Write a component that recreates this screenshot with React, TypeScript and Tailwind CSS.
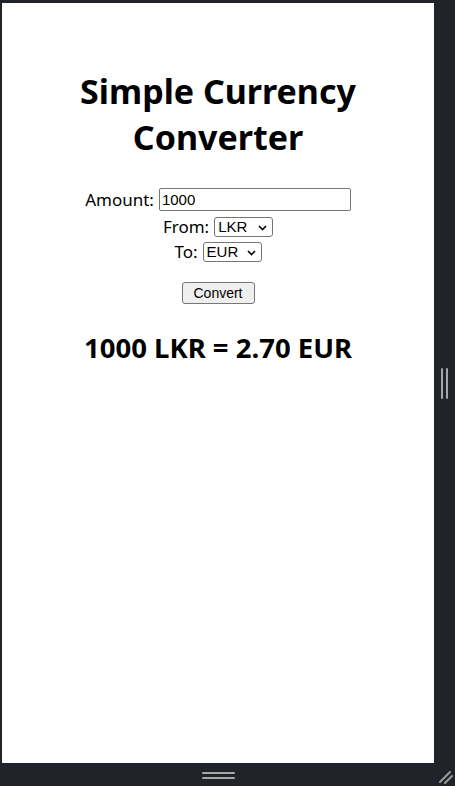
import { useState } from "react";

const rates: Record<string, number> = {
  LKR: 1,
  USD: 0.0031,
  EUR: 0.0027,
};

function Select({ value, onChange }: { value: string; onChange: (v: string) => void }) {
  return (
    <div className="relative h-[20px]">
      <select
        value={value}
        onChange={(e) => onChange(e.target.value)}
        className="block w-[59px] h-[20px] appearance-none border border-[#767676] rounded-[3px] bg-white pl-[3px] text-[15px] leading-[18px] outline-none"
        style={{ fontFamily: '"Liberation Sans", Arial, sans-serif' }}
      >
        {Object.keys(rates).map((c) => (
          <option key={c} value={c}>
            {c}
          </option>
        ))}
      </select>
      {/* Chevron */}
      <svg
        className="absolute right-[6px] top-[8px] pointer-events-none"
        width="9"
        height="6"
        viewBox="0 0 9 6"
        fill="none"
      >
        <path d="M1 1l3.5 3.5L8 1" stroke="#000" strokeWidth="1.6" />
      </svg>
    </div>
  );
}

export default function App() {
  const [amount, setAmount] = useState("1000");
  const [from, setFrom] = useState("LKR");
  const [to, setTo] = useState("EUR");
  const [result, setResult] = useState("1000 LKR = 2.70 EUR");

  const handleConvert = () => {
    const value = (parseFloat(amount) || 0) * (rates[to] / rates[from]);
    setResult(`${amount} ${from} = ${value.toFixed(2)} ${to}`);
  };

  return (
    <div className="h-screen w-full bg-[#202329] flex flex-col overflow-hidden">
      <div className="flex flex-1 pt-[3px] pl-[2px]">
        {/* Page */}
        <div
          className="flex-1 bg-white flex flex-col items-center pt-[65px] text-black"
          style={{ fontFamily: '"Noto Sans", "Segoe UI", sans-serif' }}
        >
          <h1 className="text-[34px] leading-[46px] font-bold text-center max-w-[320px]">
            Simple Currency Converter
          </h1>

          <div className="flex flex-col items-center mt-[28px] text-[17px]">
            <div className="flex items-center gap-[5px] h-[23px]">
              <span>Amount:</span>
              <input
                value={amount}
                onChange={(e) => setAmount(e.target.value)}
                className="w-[192px] h-[23px] border border-[#767676] rounded-[2px] px-[2px] text-[15px] outline-none"
                style={{ fontFamily: '"Liberation Sans", Arial, sans-serif' }}
              />
            </div>
            <div className="flex items-center gap-[5px] h-[20px] mt-[6px]">
              <span>From:</span>
              <Select value={from} onChange={setFrom} />
            </div>
            <div className="flex items-center gap-[5px] h-[20px] mt-[5px]">
              <span>To:</span>
              <Select value={to} onChange={setTo} />
            </div>
          </div>

          <button
            onClick={handleConvert}
            className="mt-[20px] w-[73px] h-[22px] bg-[#efefef] border border-[#767676] rounded-[3px] text-[14px]"
            style={{ fontFamily: '"Liberation Sans", Arial, sans-serif' }}
          >
            Convert
          </button>

          <h2 className="mt-[27px] text-[27.5px] leading-[34px] font-bold">{result}</h2>
        </div>

        {/* Right resize bar */}
        <div className="w-[21px] flex items-center justify-center">
          <div className="flex gap-[3px]">
            <div className="w-[2px] h-[31px] bg-[#a6a6a6] rounded-full" />
            <div className="w-[2px] h-[31px] bg-[#a6a6a6] rounded-full" />
          </div>
        </div>
      </div>

      {/* Bottom resize bar */}
      <div className="h-[23px] flex items-center relative">
        <div className="flex-1 flex justify-center pl-[2px] pr-[21px]">
          <div className="flex flex-col gap-[3px] pt-[1px]">
            <div className="w-[33px] h-[2px] bg-[#a6a6a6] rounded-full" />
            <div className="w-[33px] h-[2px] bg-[#a6a6a6] rounded-full" />
          </div>
        </div>
        <svg className="absolute right-[2px] bottom-[2px]" width="16" height="16" viewBox="0 0 16 16">
          <path d="M3 14L13 4M8 15L15 8" stroke="#9a9a9a" strokeWidth="2" strokeLinecap="round" />
        </svg>
      </div>
    </div>
  );
}
